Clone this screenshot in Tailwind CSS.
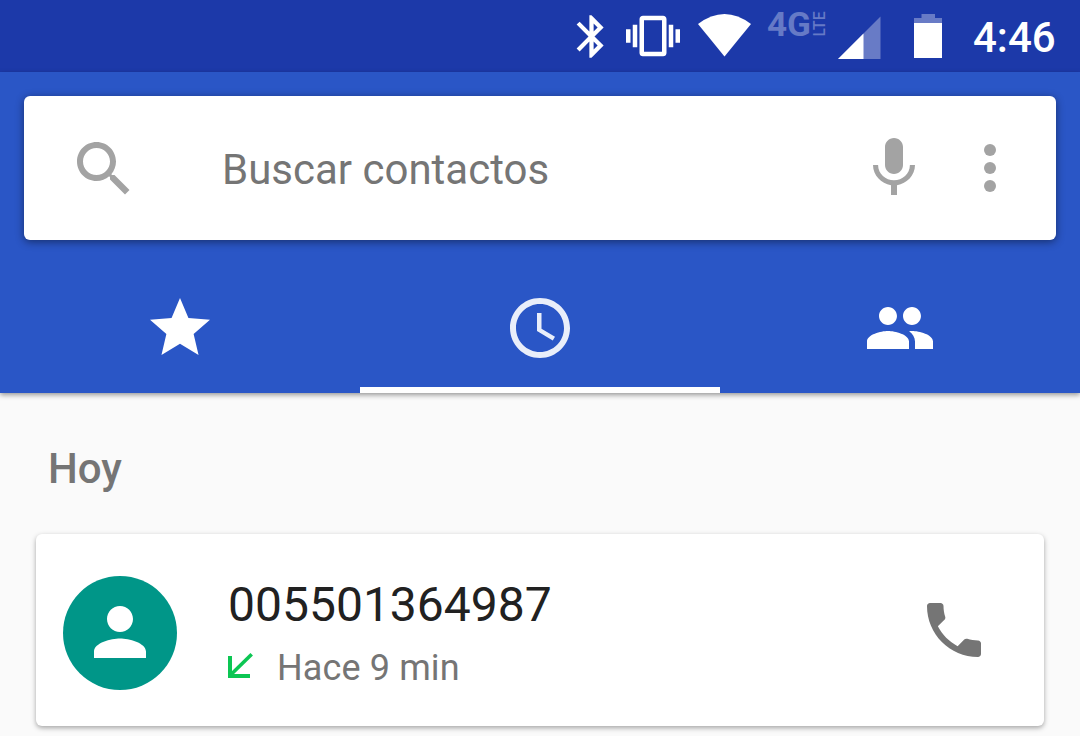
<!DOCTYPE html>
<html lang="es">
<head>
<meta charset="utf-8">
<title>Teléfono</title>
<script src="https://cdn.jsdelivr.net/npm/@tailwindcss/browser@4"></script>
</head>
<body class="w-[1080px] h-[736px] overflow-hidden bg-[#fafafa] font-['Roboto',sans-serif] flex flex-col">
  <!-- Status bar -->
  <div class="h-[72px] shrink-0 bg-[#1c39a9] text-white flex items-start justify-end pr-[24px]">
    <svg class="w-[51px] h-[51px] mt-[11px]" viewBox="0 0 24 24" fill="currentColor"><path d="M17.71 7.71L12 2h-1v7.59L6.41 5 5 6.41 10.59 12 5 17.59 6.41 19 11 14.41V22h1l5.71-5.71-4.3-4.29 4.3-4.29zM13 5.83l1.88 1.88L13 9.59V5.83zm1.88 10.46L13 18.17v-3.76l1.88 1.88z"/></svg>
    <svg class="w-[54px] h-[54px] mt-[9px] ml-[9px]" viewBox="0 0 24 24" fill="currentColor"><path d="M0 15h2V9H0v6zm3 2h2V7H3v10zm19-8v6h2V9h-2zm-3 8h2V7h-2v10zM16.5 3h-9C6.67 3 6 3.67 6 4.5v15c0 .83.67 1.5 1.5 1.5h9c.83 0 1.5-.67 1.5-1.5v-15c0-.83-.67-1.5-1.5-1.5zM16 19H8V5h8v14z"/></svg>
    <svg class="w-[54px] h-[46px] mt-[12px] ml-[18px]" viewBox="0 0 54 46" fill="currentColor"><path d="M26.500 44.500L0 12Q26.500 -8 53 12Z"/></svg>
    <svg class="w-[60px] h-[40px] mt-[4px] ml-[15px] overflow-visible" viewBox="0 0 60 40" fill="#667ac6">
      <text x="0" y="32" font-size="33" font-weight="700" textLength="44" lengthAdjust="spacingAndGlyphs">4G</text>
      <text transform="translate(57.500 32.500) rotate(-90)" font-size="17" font-weight="500" textLength="25" lengthAdjust="spacingAndGlyphs">LTE</text>
    </svg>
    <svg class="w-[43px] h-[43px] mt-[16px] ml-[11px]" viewBox="0 0 43 43"><path fill="#687bc6" d="M0 43L42.500 .5V43z"/><path fill="#fff" d="M0 43L25.500 17.500V43z"/></svg>
    <svg class="w-[28px] h-[44px] mt-[14px] ml-[33px]" viewBox="0 0 28 44"><path fill="#687bc6" d="M7.500 0h13.500v4h7v5H0V4h7.500z"/><path fill="#fff" d="M0 9h28v35H0z"/></svg>
    <div class="ml-[31px] mt-[13px] text-[42px] leading-[50px] font-medium w-[83px] whitespace-nowrap">4:46</div>
  </div>

  <!-- Header with search and tabs -->
  <header class="h-[321px] shrink-0 bg-[#2a56c6] pt-[24px] flex flex-col relative z-10 shadow-[0_2px_5px_rgba(0,0,0,0.4)]">
    <div class="mx-[24px] h-[144px] bg-white rounded-[6px] shadow-[0_2px_8px_rgba(0,0,0,0.45)] flex items-center pl-[44px] pr-[30px] text-[#a3a3a3]">
      <svg class="w-[72px] h-[72px] mt-[2px]" viewBox="0 0 24 24" fill="currentColor"><path d="M15.500 14h-.79l-.28-.27C15.410 12.590 16 11.110 16 9.500 16 5.910 13.090 3 9.500 3S3 5.910 3 9.500 5.910 16 9.500 16c1.610 0 3.090-.59 4.230-1.570l.27.28v.79l5 4.990L20.490 19l-4.990-5zm-6 0C7.010 14 5 11.990 5 9.500S7.010 5 9.500 5 14 7.010 14 9.500 11.990 14 9.500 14z"/></svg>
      <div class="ml-[82px] mt-[4px] flex-1 text-[42px] leading-[50px] text-[#757575]">Buscar contactos</div>
      <svg class="w-[72px] h-[72px]" viewBox="0 0 24 24" fill="currentColor"><path d="M12 14c1.660 0 3-1.340 3-3V5c0-1.660-1.340-3-3-3S9 3.340 9 5v6c0 1.660 1.340 3 3 3zm5.300-3c0 3-2.540 5.100-5.300 5.100S6.700 14 6.700 11H5c0 3.410 2.720 6.230 6 6.720V21h2v-3.280c3.280-.48 6-3.300 6-6.720h-1.700z"/></svg>
      <svg class="w-[72px] h-[72px] ml-[24px]" viewBox="0 0 24 24" fill="currentColor"><circle cx="12" cy="6" r="2"/><circle cx="12" cy="12" r="2"/><circle cx="12" cy="18" r="2"/></svg>
    </div>
    <nav class="flex-1 grid grid-cols-3 pt-[24px] text-white">
      <div class="flex justify-center items-start pt-[28px]">
        <svg class="w-[72px] h-[72px]" viewBox="0 0 24 24" fill="currentColor"><path d="M12 17.270L18.180 21l-1.640-7.030L22 9.240l-7.190-.61L12 2 9.190 8.630 2 9.240l5.460 4.730L5.820 21z"/></svg>
      </div>
      <div class="flex justify-center items-start pt-[28px] border-b-[6px] border-white">
        <svg class="w-[72px] h-[72px]" viewBox="0 0 24 24" fill="#e9eefa"><path d="M11.990 2C6.470 2 2 6.480 2 12s4.470 10 9.990 10C17.520 22 22 17.520 22 12S17.520 2 11.990 2zM12 20c-4.420 0-8-3.580-8-8s3.580-8 8-8 8 3.580 8 8-3.580 8-8 8zm.5-13H11v6l5.250 3.150.75-1.230-4.500-2.670z"/></svg>
      </div>
      <div class="flex justify-center items-start pt-[28px]">
        <svg class="w-[72px] h-[72px]" viewBox="0 0 24 24" fill="currentColor"><path d="M16 11c1.660 0 2.990-1.340 2.990-3S17.660 5 16 5c-1.660 0-3 1.340-3 3s1.340 3 3 3zm-8 0c1.660 0 2.990-1.340 2.990-3S9.660 5 8 5C6.340 5 5 6.340 5 8s1.340 3 3 3zm0 2c-2.330 0-7 1.170-7 3.500V19h14v-2.500c0-2.330-4.670-3.500-7-3.500zm8 0c-.29 0-.62.020-.97.050 1.160.84 1.970 1.970 1.970 3.450V19h6v-2.500c0-2.330-4.670-3.500-7-3.500z"/></svg>
      </div>
    </nav>
  </header>

  <!-- Call log -->
  <main class="flex-1 px-[36px] pt-[51px]">
    <h2 class="pl-[12px] text-[42px] leading-[50px] font-medium text-[#757575]">Hoy</h2>
    <div class="mt-[40px] h-[192px] bg-white rounded-[6px] shadow-[0_2px_5px_rgba(0,0,0,0.34)] flex items-center pl-[27px] pr-[54px]">
      <div class="w-[114px] h-[114px] mt-[6px] rounded-full bg-[#009688] flex justify-center items-start pt-[17px]">
        <svg class="w-[78px] h-[78px]" viewBox="0 0 24 24" fill="#fff"><path d="M12 12c2.210 0 4-1.790 4-4s-1.790-4-4-4-4 1.790-4 4 1.790 4 4 4zm0 2c-2.670 0-8 1.340-8 4v2h16v-2c0-2.660-5.330-4-8-4z"/></svg>
      </div>
      <div class="flex-1 ml-[51px] mt-[5px]">
        <div class="text-[48px] leading-[57px] text-[#212121]">005501364987</div>
        <div class="mt-[14px] flex items-center text-[36px] leading-[42px] tracking-[0.12px] text-[#757575]">
          <svg class="w-[26px] h-[26px] mt-[-6px]" viewBox="0 0 26 26" fill="none" stroke="#0cc653"><path stroke-width="4" d="M2 4V24H22"/><path stroke-width="3.600" d="M2.500 23L23.700 2.200"/></svg>
          <span class="ml-[23px]">Hace 9 min</span>
        </div>
      </div>
      <svg class="w-[72px] h-[72px]" viewBox="0 0 24 24" fill="#757575"><path d="M6.620 10.790c1.440 2.830 3.760 5.140 6.590 6.590l2.200-2.200c.27-.27.67-.36 1.020-.24 1.120.37 2.330.57 3.570.57.55 0 1 .45 1 1V20c0 .55-.45 1-1 1-9.390 0-17-7.610-17-17 0-.55.45-1 1-1h3.500c.55 0 1 .45 1 1 0 1.250.2 2.450.57 3.570.11.35.03.74-.25 1.020l-2.200 2.200z"/></svg>
    </div>
  </main>
</body>
</html>
